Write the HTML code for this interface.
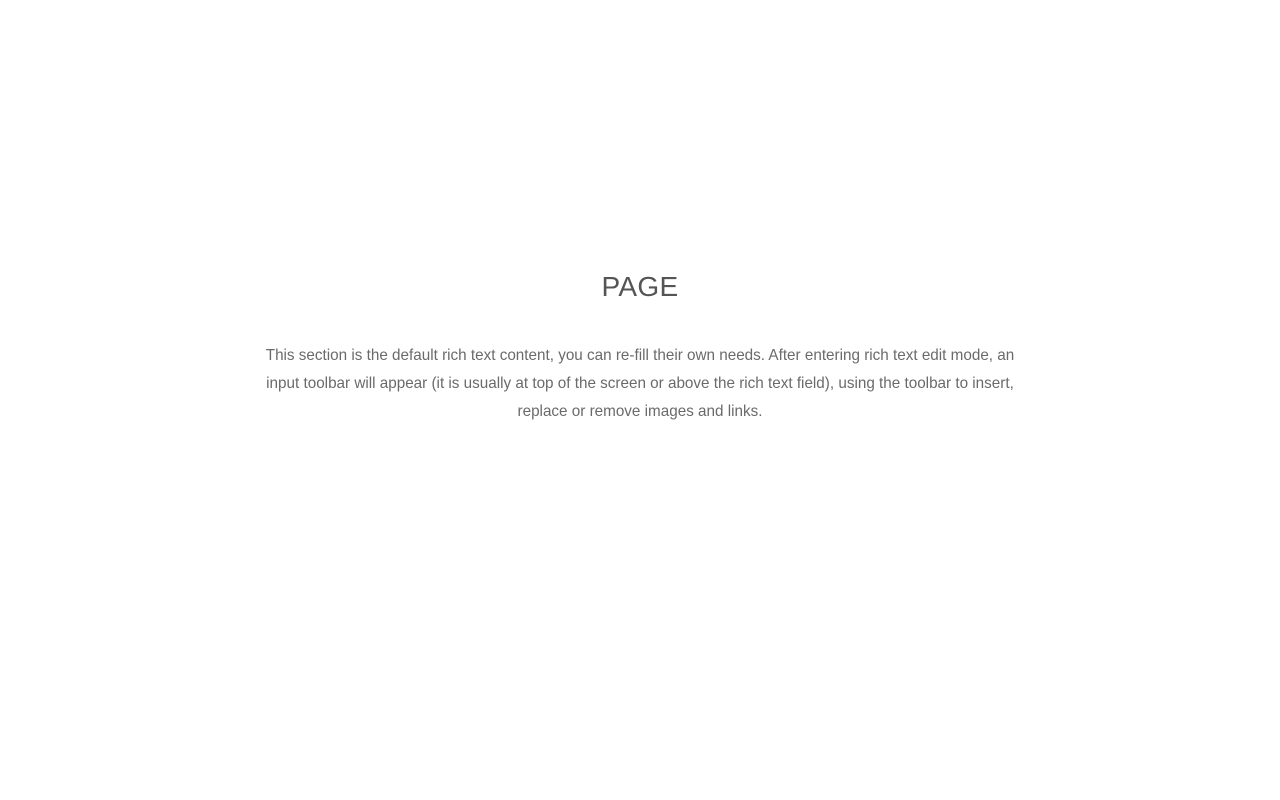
<!DOCTYPE html>
<html><head><style>
html,body{margin:0;background:#fff;width:1280px;height:800px;overflow:hidden}
h1{position:absolute;top:269px;left:0;width:1280px;text-align:center;margin:0;font:300 28px/36px "Liberation Sans",sans-serif;color:#555;letter-spacing:0.3px}
p{position:absolute;top:342px;left:0;width:1280px;text-align:center;margin:0;font:15.25px/28px "Liberation Sans",sans-serif;color:#6a6a6a;white-space:nowrap}
</style></head><body>
<h1>PAGE</h1>
<p>This section is the default rich text content, you can re-fill their own needs. After entering rich text edit mode, an<br>input toolbar will appear (it is usually at top of the screen or above the rich text field), using the toolbar to insert,<br>replace or remove images and links.</p>
</body></html>
